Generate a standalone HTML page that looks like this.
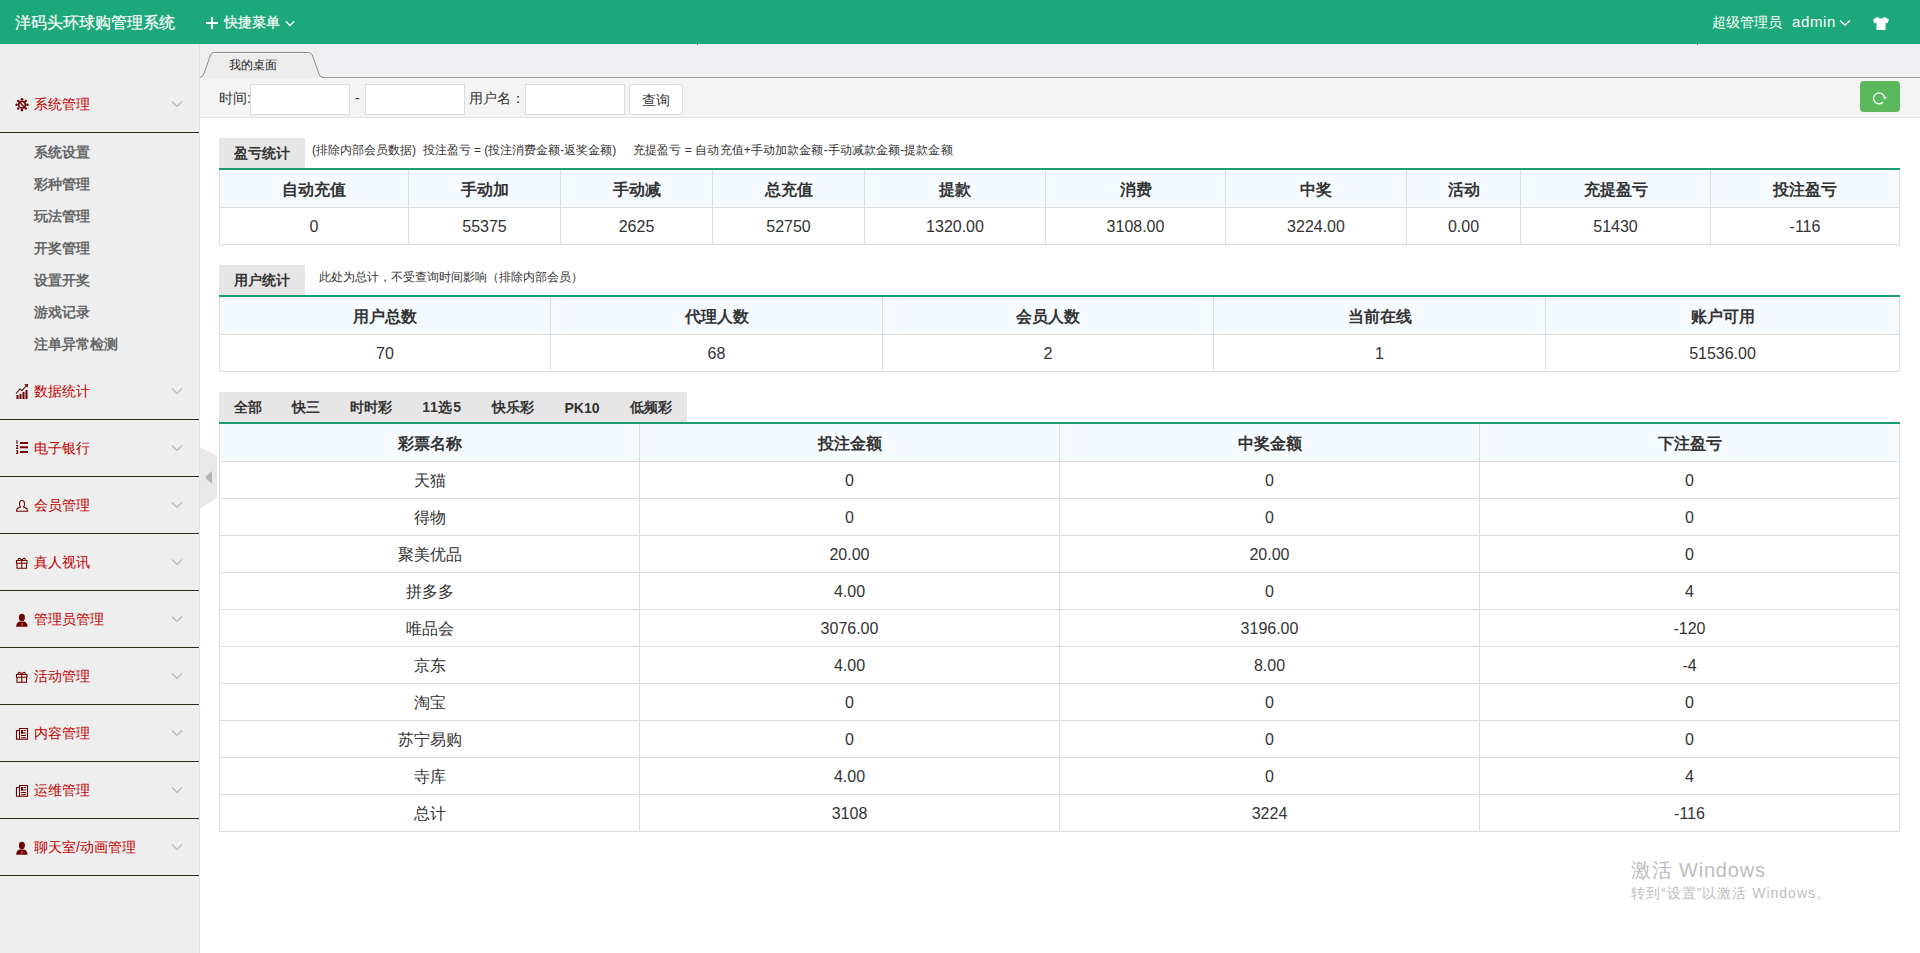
<!DOCTYPE html>
<html><head><meta charset="utf-8"><title>洋码头环球购管理系统</title>
<style>
html,body{margin:0;padding:0;}
body{width:1920px;height:953px;overflow:hidden;position:relative;background:#fff;font-family:"Liberation Sans", sans-serif;}
.c{position:absolute;display:flex;align-items:center;justify-content:center;white-space:nowrap;}
.l{position:absolute;height:20px;line-height:20px;white-space:nowrap;}
</style></head><body>
<div style="position:absolute;left:0;top:0;width:1920px;height:44px;background:#1ca87a"></div><div class="l" style="left:15px;top:13px;font-size:16px;color:#fff;-webkit-text-stroke:0.2px #fff">洋码头环球购管理系统</div><div style="position:absolute;left:206px;top:22px;width:12px;height:2px;background:#fff"></div><div style="position:absolute;left:211px;top:17px;width:2px;height:12px;background:#fff"></div><div class="l" style="left:224px;top:12px;font-size:14px;color:#fff;-webkit-text-stroke:0.2px #fff">快捷菜单</div><svg style="position:absolute;left:285px;top:19.5px" width="10" height="8"><path d="M1 1.5 L5 5.5 L9 1.5" stroke="#fff" stroke-width="1.4" fill="none"/></svg><div class="l" style="left:1712px;top:12px;font-size:14px;color:#fff">超级管理员</div><div class="l" style="left:1792px;top:12px;font-size:15px;color:#fff;letter-spacing:0.6px">admin</div><svg style="position:absolute;left:1839px;top:19px" width="12" height="8"><path d="M1 1.5 L6 6 L11 1.5" stroke="#fff" stroke-width="1.4" fill="none"/></svg><svg style="position:absolute;left:1872px;top:16px" width="18" height="15" viewBox="0 0 18 15"><path d="M5.5 1 L1 3.5 L2.5 7.5 L4.5 6.5 L4.5 14 L13.5 14 L13.5 6.5 L15.5 7.5 L17 3.5 L12.5 1 Q9 4 5.5 1 Z" fill="#fff"/></svg><div style="position:absolute;left:0;top:44px;width:199px;height:909px;background:#eeeeee"></div><div style="position:absolute;left:199px;top:44px;width:1px;height:909px;background:#e2e2e2"></div><svg style="position:absolute;left:14px;top:96px;overflow:visible" width="16" height="16" viewBox="0 0 16 16"><g fill="none" stroke="#6e0000"><circle cx="8" cy="8.7" r="3.3" stroke-width="1.6"/></g><g fill="#6e0000"><circle cx="8" cy="3.3" r="1.3"/><circle cx="8" cy="14.1" r="1.3"/><circle cx="2.6" cy="8.7" r="1.3"/><circle cx="13.4" cy="8.7" r="1.3"/><circle cx="4.2" cy="4.9" r="1.2"/><circle cx="11.8" cy="4.9" r="1.2"/><circle cx="4.2" cy="12.5" r="1.2"/><circle cx="11.8" cy="12.5" r="1.2"/></g><path d="M6.5 7 L9.8 10.8" stroke="#6e0000" stroke-width="1.3"/></svg><div class="l" style="left:34px;top:94px;font-size:14px;color:#c00000">系统管理</div><svg style="position:absolute;left:171px;top:100px" width="12" height="8"><path d="M1 1.5 L6 6.5 L11 1.5" stroke="#b5b5b5" stroke-width="1.1" fill="none"/></svg><div style="position:absolute;left:0px;top:132px;width:199px;height:1px;background:#2b2e12"></div><div class="l" style="left:34px;top:142px;font-size:14px;color:#666;font-weight:bold">系统设置</div><div class="l" style="left:34px;top:174px;font-size:14px;color:#666;font-weight:bold">彩种管理</div><div class="l" style="left:34px;top:206px;font-size:14px;color:#666;font-weight:bold">玩法管理</div><div class="l" style="left:34px;top:238px;font-size:14px;color:#666;font-weight:bold">开奖管理</div><div class="l" style="left:34px;top:270px;font-size:14px;color:#666;font-weight:bold">设置开奖</div><div class="l" style="left:34px;top:302px;font-size:14px;color:#666;font-weight:bold">游戏记录</div><div class="l" style="left:34px;top:334px;font-size:14px;color:#666;font-weight:bold">注单异常检测</div><svg style="position:absolute;left:14px;top:383px;overflow:visible" width="16" height="16" viewBox="0 0 16 16"><g fill="#6e0000"><rect x="2.5" y="12" width="2" height="4"/><rect x="5.5" y="11" width="2" height="5"/><rect x="8.5" y="9" width="2" height="7"/><rect x="11.5" y="7" width="2" height="9"/><path d="M10.3 1.3 L14 1 L13.7 4.7 Z"/></g><path d="M2 10.5 L6 6 L8 7.5 L12.8 2.2" stroke="#6e0000" stroke-width="1.1" fill="none"/></svg><div class="l" style="left:34px;top:381px;font-size:14px;color:#c00000">数据统计</div><svg style="position:absolute;left:171px;top:387px" width="12" height="8"><path d="M1 1.5 L6 6.5 L11 1.5" stroke="#b5b5b5" stroke-width="1.1" fill="none"/></svg><div style="position:absolute;left:0px;top:419px;width:199px;height:1px;background:#2b2e12"></div><svg style="position:absolute;left:14px;top:440px;overflow:visible" width="16" height="16" viewBox="0 0 16 16"><g fill="#6e0000"><rect x="6" y="2" width="8" height="2"/><rect x="6" y="6.3" width="8" height="2"/><rect x="6" y="11" width="8" height="2"/><rect x="2.3" y="0.2" width="1.2" height="3.6"/><path d="M2 5 H4.2 V7 L3 8 H4.2 V9 H2 V8 L3.2 6.5 V6 H2 Z"/><path d="M2 10.3 H4.2 V14 H2 V13 H3.2 V12.5 H2.3 V11.8 H3.2 V11.2 H2 Z"/></g></svg><div class="l" style="left:34px;top:438px;font-size:14px;color:#c00000">电子银行</div><svg style="position:absolute;left:171px;top:444px" width="12" height="8"><path d="M1 1.5 L6 6.5 L11 1.5" stroke="#b5b5b5" stroke-width="1.1" fill="none"/></svg><div style="position:absolute;left:0px;top:476px;width:199px;height:1px;background:#2b2e12"></div><svg style="position:absolute;left:14px;top:497px;overflow:visible" width="16" height="16" viewBox="0 0 16 16"><path d="M8 3.5 C6 3.5 5.5 5 5.5 7 C5.5 8.5 6 9.5 6.5 10 L3.8 11.3 Q2.6 12 2.6 14.3 L13.5 14.3 Q13.5 12 12.2 11.3 L9.5 10 C10 9.5 10.5 8.5 10.5 7 C10.5 5 10 3.5 8 3.5 Z" fill="none" stroke="#6e0000" stroke-width="1.1"/></svg><div class="l" style="left:34px;top:495px;font-size:14px;color:#c00000">会员管理</div><svg style="position:absolute;left:171px;top:501px" width="12" height="8"><path d="M1 1.5 L6 6.5 L11 1.5" stroke="#b5b5b5" stroke-width="1.1" fill="none"/></svg><div style="position:absolute;left:0px;top:533px;width:199px;height:1px;background:#2b2e12"></div><svg style="position:absolute;left:14px;top:554px;overflow:visible" width="16" height="16" viewBox="0 0 16 16"><g fill="none" stroke="#6e0000" stroke-width="1.1"><path d="M2.5 6.5 H13 V9.3 H2.5 Z"/><path d="M3 9.3 V14.3 H12.5 V9.3"/><path d="M7.75 6.5 V14.3"/><path d="M7.75 6.5 C6.5 4 4 3.5 4.2 6.3 M7.75 6.5 C9 4 11.5 3.5 11.3 6.3"/></g></svg><div class="l" style="left:34px;top:552px;font-size:14px;color:#c00000">真人视讯</div><svg style="position:absolute;left:171px;top:558px" width="12" height="8"><path d="M1 1.5 L6 6.5 L11 1.5" stroke="#b5b5b5" stroke-width="1.1" fill="none"/></svg><div style="position:absolute;left:0px;top:590px;width:199px;height:1px;background:#2b2e12"></div><svg style="position:absolute;left:14px;top:611px;overflow:visible" width="16" height="16" viewBox="0 0 16 16"><g fill="#6e0000"><ellipse cx="7.9" cy="6.4" rx="3" ry="3.7"/><path d="M2.2 15.7 Q2.2 11.3 6 10.6 L9.8 10.6 Q13.5 11.3 13.5 15.7 Z"/></g><rect x="7.3" y="12" width="1.2" height="3" fill="#b06060"/></svg><div class="l" style="left:34px;top:609px;font-size:14px;color:#c00000">管理员管理</div><svg style="position:absolute;left:171px;top:615px" width="12" height="8"><path d="M1 1.5 L6 6.5 L11 1.5" stroke="#b5b5b5" stroke-width="1.1" fill="none"/></svg><div style="position:absolute;left:0px;top:647px;width:199px;height:1px;background:#2b2e12"></div><svg style="position:absolute;left:14px;top:668px;overflow:visible" width="16" height="16" viewBox="0 0 16 16"><g fill="none" stroke="#6e0000" stroke-width="1.1"><path d="M2.5 6.5 H13 V9.3 H2.5 Z"/><path d="M3 9.3 V14.3 H12.5 V9.3"/><path d="M7.75 6.5 V14.3"/><path d="M7.75 6.5 C6.5 4 4 3.5 4.2 6.3 M7.75 6.5 C9 4 11.5 3.5 11.3 6.3"/></g></svg><div class="l" style="left:34px;top:666px;font-size:14px;color:#c00000">活动管理</div><svg style="position:absolute;left:171px;top:672px" width="12" height="8"><path d="M1 1.5 L6 6.5 L11 1.5" stroke="#b5b5b5" stroke-width="1.1" fill="none"/></svg><div style="position:absolute;left:0px;top:704px;width:199px;height:1px;background:#2b2e12"></div><svg style="position:absolute;left:14px;top:725px;overflow:visible" width="16" height="16" viewBox="0 0 16 16"><g fill="none" stroke="#6e0000" stroke-width="1.1"><path d="M5.5 3.5 H13.5 V14.3 H2.5 V5.5 H5.5 Z M5.5 5.5 V14.3"/><path d="M9.5 5.5 H12 M7 8 H12 M7 10.5 H12 M7 12.7 H12"/></g><rect x="7" y="5" width="2" height="3.5" fill="#6e0000"/></svg><div class="l" style="left:34px;top:723px;font-size:14px;color:#c00000">内容管理</div><svg style="position:absolute;left:171px;top:729px" width="12" height="8"><path d="M1 1.5 L6 6.5 L11 1.5" stroke="#b5b5b5" stroke-width="1.1" fill="none"/></svg><div style="position:absolute;left:0px;top:761px;width:199px;height:1px;background:#2b2e12"></div><svg style="position:absolute;left:14px;top:782px;overflow:visible" width="16" height="16" viewBox="0 0 16 16"><g fill="none" stroke="#6e0000" stroke-width="1.1"><path d="M5.5 3.5 H13.5 V14.3 H2.5 V5.5 H5.5 Z M5.5 5.5 V14.3"/><path d="M9.5 5.5 H12 M7 8 H12 M7 10.5 H12 M7 12.7 H12"/></g><rect x="7" y="5" width="2" height="3.5" fill="#6e0000"/></svg><div class="l" style="left:34px;top:780px;font-size:14px;color:#c00000">运维管理</div><svg style="position:absolute;left:171px;top:786px" width="12" height="8"><path d="M1 1.5 L6 6.5 L11 1.5" stroke="#b5b5b5" stroke-width="1.1" fill="none"/></svg><div style="position:absolute;left:0px;top:818px;width:199px;height:1px;background:#2b2e12"></div><svg style="position:absolute;left:14px;top:839px;overflow:visible" width="16" height="16" viewBox="0 0 16 16"><g fill="#6e0000"><ellipse cx="7.9" cy="6.4" rx="3" ry="3.7"/><path d="M2.2 15.7 Q2.2 11.3 6 10.6 L9.8 10.6 Q13.5 11.3 13.5 15.7 Z"/></g><rect x="7.3" y="12" width="1.2" height="3" fill="#b06060"/></svg><div class="l" style="left:34px;top:837px;font-size:14px;color:#c00000">聊天室/动画管理</div><svg style="position:absolute;left:171px;top:843px" width="12" height="8"><path d="M1 1.5 L6 6.5 L11 1.5" stroke="#b5b5b5" stroke-width="1.1" fill="none"/></svg><div style="position:absolute;left:0px;top:875px;width:199px;height:1px;background:#2b2e12"></div><svg style="position:absolute;left:200px;top:447px" width="18" height="62" viewBox="0 0 18 62"><path d="M0 0 L17 9 L17 51 L0 61.5 Z" fill="#e8e8e8"/><path d="M12 24 L5 30.5 L12 37 Z" fill="#b4b4b4"/></svg><div style="position:absolute;left:200px;top:44px;width:1720px;height:34px;background:#efeff1"></div><div style="position:absolute;left:322px;top:77px;width:1598px;height:1px;background:#a0a0a0"></div><svg style="position:absolute;left:200px;top:51px" width="124" height="28" viewBox="0 0 124 28"><path d="M0 27 L0 26.5 Q3 25.5 4 22.5 L10.5 4 Q11.5 1.5 14 1.5 L108.5 1.5 Q111 1.5 112.3 4 L119.4 24 Q120.5 26.5 123 26.5 L124 26.5 L124 27 Z" fill="#ececec"/><path d="M0 26.5 Q3 25.5 4 22.5 L10.5 4 Q11.5 1.5 14 1.5 L108.5 1.5 Q111 1.5 112.3 4 L119.4 24 Q120.5 26.5 123 26.5 L124 26.5" fill="none" stroke="#8c8c8c" stroke-width="1"/><path d="M14 2.5 L108.5 2.5" stroke="#fff" stroke-width="1"/></svg><div class="l" style="left:229px;top:55px;font-size:12px;color:#222">我的桌面</div><div style="position:absolute;left:200px;top:78px;width:1720px;height:39px;background:#f4f4f4"></div><div style="position:absolute;left:200px;top:117px;width:1720px;height:1px;background:#e3e3e3"></div><div class="l" style="left:219px;top:88px;font-size:14px;color:#333">时间:</div><div style="position:absolute;left:250px;top:84px;width:98px;height:29px;background:#fff;border:1px solid #dcdcdc"></div><div class="l" style="left:355px;top:88px;font-size:14px;color:#333">-</div><div style="position:absolute;left:365px;top:84px;width:98px;height:29px;background:#fff;border:1px solid #dcdcdc"></div><div class="l" style="left:469px;top:88px;font-size:14px;color:#333">用户名：</div><div style="position:absolute;left:525px;top:84px;width:98px;height:29px;background:#fff;border:1px solid #dcdcdc"></div><div style="position:absolute;left:629px;top:84px;width:52px;height:29px;background:#fff;border:1px solid #dcdcdc;border-radius:4px"></div><div class="l" style="left:642px;top:90px;font-size:14px;color:#333">查询</div><div style="position:absolute;left:1860px;top:81px;width:40px;height:31px;background:#5cb85c;border-radius:4px"></div><svg style="position:absolute;left:1870px;top:88px" width="20" height="20" viewBox="0 0 20 20"><path d="M14.3 8.6 A5.5 5.5 0 1 0 13 14.2" stroke="#fff" stroke-width="1.3" fill="none"/><path d="M12.6 8.6 L17 8.9 L14.6 11.6 Z" fill="#fff"/></svg><div style="position:absolute;left:219px;top:138px;width:86px;height:30px;background:#e6e6e6"></div><div class="c" style="left:219px;top:139px;width:86px;height:30px;font-size:14px;font-weight:bold;color:#333">盈亏统计</div><div class="l" style="left:312px;top:140px;font-size:12px;color:#333">(排除内部会员数据) &nbsp;投注盈亏 = (投注消费金额-返奖金额) &nbsp;&nbsp;&nbsp;&nbsp;<span style="letter-spacing:0.1px">充提盈亏 = 自动充值+手动加款金额-手动减款金额-提款金额</span></div><div style="position:absolute;left:219px;top:168px;width:1681px;height:2px;background:#1a9e70"></div><div style="position:absolute;left:220px;top:170px;width:1679px;height:37px;background:#f5fafe"></div><div style="position:absolute;left:219px;top:207px;width:1681px;height:1px;background:#dddddd"></div><div style="position:absolute;left:219px;top:244px;width:1681px;height:1px;background:#dddddd"></div><div style="position:absolute;left:219px;top:170px;width:1px;height:75px;background:#dddddd"></div><div style="position:absolute;left:408px;top:170px;width:1px;height:75px;background:#dddddd"></div><div style="position:absolute;left:560px;top:170px;width:1px;height:75px;background:#dddddd"></div><div style="position:absolute;left:712px;top:170px;width:1px;height:75px;background:#dddddd"></div><div style="position:absolute;left:864px;top:170px;width:1px;height:75px;background:#dddddd"></div><div style="position:absolute;left:1045px;top:170px;width:1px;height:75px;background:#dddddd"></div><div style="position:absolute;left:1225px;top:170px;width:1px;height:75px;background:#dddddd"></div><div style="position:absolute;left:1406px;top:170px;width:1px;height:75px;background:#dddddd"></div><div style="position:absolute;left:1520px;top:170px;width:1px;height:75px;background:#dddddd"></div><div style="position:absolute;left:1710px;top:170px;width:1px;height:75px;background:#dddddd"></div><div style="position:absolute;left:1899px;top:170px;width:1px;height:75px;background:#dddddd"></div><div class="c" style="left:220px;top:172px;width:188px;height:37px;font-size:16px;font-weight:bold;color:#333">自动充值</div><div class="c" style="left:409px;top:172px;width:151px;height:37px;font-size:16px;font-weight:bold;color:#333">手动加</div><div class="c" style="left:561px;top:172px;width:151px;height:37px;font-size:16px;font-weight:bold;color:#333">手动减</div><div class="c" style="left:713px;top:172px;width:151px;height:37px;font-size:16px;font-weight:bold;color:#333">总充值</div><div class="c" style="left:865px;top:172px;width:180px;height:37px;font-size:16px;font-weight:bold;color:#333">提款</div><div class="c" style="left:1046px;top:172px;width:179px;height:37px;font-size:16px;font-weight:bold;color:#333">消费</div><div class="c" style="left:1226px;top:172px;width:180px;height:37px;font-size:16px;font-weight:bold;color:#333">中奖</div><div class="c" style="left:1407px;top:172px;width:113px;height:37px;font-size:16px;font-weight:bold;color:#333">活动</div><div class="c" style="left:1521px;top:172px;width:189px;height:37px;font-size:16px;font-weight:bold;color:#333">充提盈亏</div><div class="c" style="left:1711px;top:172px;width:188px;height:37px;font-size:16px;font-weight:bold;color:#333">投注盈亏</div><div class="c" style="left:220px;top:209px;width:188px;height:36px;font-size:16px;color:#333">0</div><div class="c" style="left:409px;top:209px;width:151px;height:36px;font-size:16px;color:#333">55375</div><div class="c" style="left:561px;top:209px;width:151px;height:36px;font-size:16px;color:#333">2625</div><div class="c" style="left:713px;top:209px;width:151px;height:36px;font-size:16px;color:#333">52750</div><div class="c" style="left:865px;top:209px;width:180px;height:36px;font-size:16px;color:#333">1320.00</div><div class="c" style="left:1046px;top:209px;width:179px;height:36px;font-size:16px;color:#333">3108.00</div><div class="c" style="left:1226px;top:209px;width:180px;height:36px;font-size:16px;color:#333">3224.00</div><div class="c" style="left:1407px;top:209px;width:113px;height:36px;font-size:16px;color:#333">0.00</div><div class="c" style="left:1521px;top:209px;width:189px;height:36px;font-size:16px;color:#333">51430</div><div class="c" style="left:1711px;top:209px;width:188px;height:36px;font-size:16px;color:#333">-116</div><div style="position:absolute;left:219px;top:265px;width:86px;height:30px;background:#e6e6e6"></div><div class="c" style="left:219px;top:266px;width:86px;height:30px;font-size:14px;font-weight:bold;color:#333">用户统计</div><div class="l" style="left:319px;top:267px;font-size:12px;color:#333">此处为总计，不受查询时间影响（排除内部会员）</div><div style="position:absolute;left:219px;top:295px;width:1681px;height:2px;background:#1a9e70"></div><div style="position:absolute;left:220px;top:297px;width:1679px;height:37px;background:#f5fafe"></div><div style="position:absolute;left:219px;top:334px;width:1681px;height:1px;background:#dddddd"></div><div style="position:absolute;left:219px;top:371px;width:1681px;height:1px;background:#dddddd"></div><div style="position:absolute;left:219px;top:297px;width:1px;height:75px;background:#dddddd"></div><div style="position:absolute;left:550px;top:297px;width:1px;height:75px;background:#dddddd"></div><div style="position:absolute;left:882px;top:297px;width:1px;height:75px;background:#dddddd"></div><div style="position:absolute;left:1213px;top:297px;width:1px;height:75px;background:#dddddd"></div><div style="position:absolute;left:1545px;top:297px;width:1px;height:75px;background:#dddddd"></div><div style="position:absolute;left:1899px;top:297px;width:1px;height:75px;background:#dddddd"></div><div class="c" style="left:220px;top:299px;width:330px;height:37px;font-size:16px;font-weight:bold;color:#333">用户总数</div><div class="c" style="left:551px;top:299px;width:331px;height:37px;font-size:16px;font-weight:bold;color:#333">代理人数</div><div class="c" style="left:883px;top:299px;width:330px;height:37px;font-size:16px;font-weight:bold;color:#333">会员人数</div><div class="c" style="left:1214px;top:299px;width:331px;height:37px;font-size:16px;font-weight:bold;color:#333">当前在线</div><div class="c" style="left:1546px;top:299px;width:353px;height:37px;font-size:16px;font-weight:bold;color:#333">账户可用</div><div class="c" style="left:220px;top:336px;width:330px;height:36px;font-size:16px;color:#333">70</div><div class="c" style="left:551px;top:336px;width:331px;height:36px;font-size:16px;color:#333">68</div><div class="c" style="left:883px;top:336px;width:330px;height:36px;font-size:16px;color:#333">2</div><div class="c" style="left:1214px;top:336px;width:331px;height:36px;font-size:16px;color:#333">1</div><div class="c" style="left:1546px;top:336px;width:353px;height:36px;font-size:16px;color:#333">51536.00</div><div style="position:absolute;left:219px;top:392px;width:468px;height:30px;background:#e6e6e6"></div><div class="c" style="left:219px;top:393px;width:58px;height:30px;font-size:14px;font-weight:bold;color:#333">全部</div><div class="c" style="left:277px;top:393px;width:58px;height:30px;font-size:14px;font-weight:bold;color:#333">快三</div><div class="c" style="left:335px;top:393px;width:72px;height:30px;font-size:14px;font-weight:bold;color:#333">时时彩</div><div class="c" style="left:407px;top:393px;width:70px;height:30px;font-size:14px;font-weight:bold;color:#333"><span style="letter-spacing:0.7px">11选5</span></div><div class="c" style="left:477px;top:393px;width:72px;height:30px;font-size:14px;font-weight:bold;color:#333">快乐彩</div><div class="c" style="left:549px;top:393px;width:66px;height:30px;font-size:14px;font-weight:bold;color:#333">PK10</div><div class="c" style="left:615px;top:393px;width:72px;height:30px;font-size:14px;font-weight:bold;color:#333">低频彩</div><div style="position:absolute;left:219px;top:422px;width:1681px;height:2px;background:#1a9e70"></div><div style="position:absolute;left:220px;top:424px;width:1679px;height:37px;background:#f5fafe"></div><div style="position:absolute;left:219px;top:461px;width:1681px;height:1px;background:#dddddd"></div><div style="position:absolute;left:219px;top:498px;width:1681px;height:1px;background:#dddddd"></div><div style="position:absolute;left:219px;top:535px;width:1681px;height:1px;background:#dddddd"></div><div style="position:absolute;left:219px;top:572px;width:1681px;height:1px;background:#dddddd"></div><div style="position:absolute;left:219px;top:609px;width:1681px;height:1px;background:#dddddd"></div><div style="position:absolute;left:219px;top:646px;width:1681px;height:1px;background:#dddddd"></div><div style="position:absolute;left:219px;top:683px;width:1681px;height:1px;background:#dddddd"></div><div style="position:absolute;left:219px;top:720px;width:1681px;height:1px;background:#dddddd"></div><div style="position:absolute;left:219px;top:757px;width:1681px;height:1px;background:#dddddd"></div><div style="position:absolute;left:219px;top:794px;width:1681px;height:1px;background:#dddddd"></div><div style="position:absolute;left:219px;top:831px;width:1681px;height:1px;background:#dddddd"></div><div style="position:absolute;left:219px;top:424px;width:1px;height:408px;background:#dddddd"></div><div style="position:absolute;left:639px;top:424px;width:1px;height:408px;background:#dddddd"></div><div style="position:absolute;left:1059px;top:424px;width:1px;height:408px;background:#dddddd"></div><div style="position:absolute;left:1479px;top:424px;width:1px;height:408px;background:#dddddd"></div><div style="position:absolute;left:1899px;top:424px;width:1px;height:408px;background:#dddddd"></div><div class="c" style="left:220px;top:426px;width:419px;height:37px;font-size:16px;font-weight:bold;color:#333">彩票名称</div><div class="c" style="left:640px;top:426px;width:419px;height:37px;font-size:16px;font-weight:bold;color:#333">投注金额</div><div class="c" style="left:1060px;top:426px;width:419px;height:37px;font-size:16px;font-weight:bold;color:#333">中奖金额</div><div class="c" style="left:1480px;top:426px;width:419px;height:37px;font-size:16px;font-weight:bold;color:#333">下注盈亏</div><div class="c" style="left:220px;top:463px;width:419px;height:36px;font-size:16px;color:#333">天猫</div><div class="c" style="left:640px;top:463px;width:419px;height:36px;font-size:16px;color:#333">0</div><div class="c" style="left:1060px;top:463px;width:419px;height:36px;font-size:16px;color:#333">0</div><div class="c" style="left:1480px;top:463px;width:419px;height:36px;font-size:16px;color:#333">0</div><div class="c" style="left:220px;top:500px;width:419px;height:36px;font-size:16px;color:#333">得物</div><div class="c" style="left:640px;top:500px;width:419px;height:36px;font-size:16px;color:#333">0</div><div class="c" style="left:1060px;top:500px;width:419px;height:36px;font-size:16px;color:#333">0</div><div class="c" style="left:1480px;top:500px;width:419px;height:36px;font-size:16px;color:#333">0</div><div class="c" style="left:220px;top:537px;width:419px;height:36px;font-size:16px;color:#333">聚美优品</div><div class="c" style="left:640px;top:537px;width:419px;height:36px;font-size:16px;color:#333">20.00</div><div class="c" style="left:1060px;top:537px;width:419px;height:36px;font-size:16px;color:#333">20.00</div><div class="c" style="left:1480px;top:537px;width:419px;height:36px;font-size:16px;color:#333">0</div><div class="c" style="left:220px;top:574px;width:419px;height:36px;font-size:16px;color:#333">拼多多</div><div class="c" style="left:640px;top:574px;width:419px;height:36px;font-size:16px;color:#333">4.00</div><div class="c" style="left:1060px;top:574px;width:419px;height:36px;font-size:16px;color:#333">0</div><div class="c" style="left:1480px;top:574px;width:419px;height:36px;font-size:16px;color:#333">4</div><div class="c" style="left:220px;top:611px;width:419px;height:36px;font-size:16px;color:#333">唯品会</div><div class="c" style="left:640px;top:611px;width:419px;height:36px;font-size:16px;color:#333">3076.00</div><div class="c" style="left:1060px;top:611px;width:419px;height:36px;font-size:16px;color:#333">3196.00</div><div class="c" style="left:1480px;top:611px;width:419px;height:36px;font-size:16px;color:#333">-120</div><div class="c" style="left:220px;top:648px;width:419px;height:36px;font-size:16px;color:#333">京东</div><div class="c" style="left:640px;top:648px;width:419px;height:36px;font-size:16px;color:#333">4.00</div><div class="c" style="left:1060px;top:648px;width:419px;height:36px;font-size:16px;color:#333">8.00</div><div class="c" style="left:1480px;top:648px;width:419px;height:36px;font-size:16px;color:#333">-4</div><div class="c" style="left:220px;top:685px;width:419px;height:36px;font-size:16px;color:#333">淘宝</div><div class="c" style="left:640px;top:685px;width:419px;height:36px;font-size:16px;color:#333">0</div><div class="c" style="left:1060px;top:685px;width:419px;height:36px;font-size:16px;color:#333">0</div><div class="c" style="left:1480px;top:685px;width:419px;height:36px;font-size:16px;color:#333">0</div><div class="c" style="left:220px;top:722px;width:419px;height:36px;font-size:16px;color:#333">苏宁易购</div><div class="c" style="left:640px;top:722px;width:419px;height:36px;font-size:16px;color:#333">0</div><div class="c" style="left:1060px;top:722px;width:419px;height:36px;font-size:16px;color:#333">0</div><div class="c" style="left:1480px;top:722px;width:419px;height:36px;font-size:16px;color:#333">0</div><div class="c" style="left:220px;top:759px;width:419px;height:36px;font-size:16px;color:#333">寺库</div><div class="c" style="left:640px;top:759px;width:419px;height:36px;font-size:16px;color:#333">4.00</div><div class="c" style="left:1060px;top:759px;width:419px;height:36px;font-size:16px;color:#333">0</div><div class="c" style="left:1480px;top:759px;width:419px;height:36px;font-size:16px;color:#333">4</div><div class="c" style="left:220px;top:796px;width:419px;height:36px;font-size:16px;color:#333">总计</div><div class="c" style="left:640px;top:796px;width:419px;height:36px;font-size:16px;color:#333">3108</div><div class="c" style="left:1060px;top:796px;width:419px;height:36px;font-size:16px;color:#333">3224</div><div class="c" style="left:1480px;top:796px;width:419px;height:36px;font-size:16px;color:#333">-116</div><div style="position:absolute;left:697px;top:44px;width:1px;height:1px;background:#6a5a60"></div><div style="position:absolute;left:1697px;top:44px;width:1px;height:1px;background:#6a5a60"></div><div class="l" style="left:1631px;top:860px;font-size:20px;color:#bdbdbd;letter-spacing:0.8px">激活 Windows</div><div class="l" style="left:1631px;top:883px;font-size:14px;color:#bdbdbd;letter-spacing:1px">转到“设置”以激活 Windows。</div>
</body></html>
